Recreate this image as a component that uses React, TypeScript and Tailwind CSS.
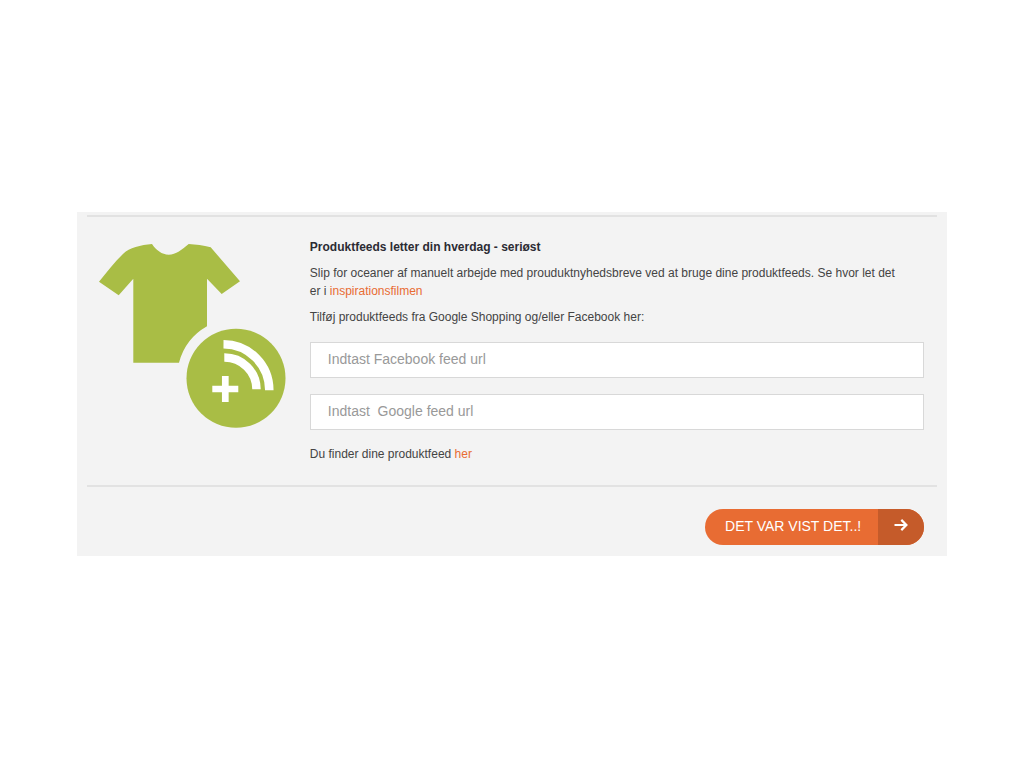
import { useState } from "react";

const inputClass =
  "block w-full h-9 px-[17px] pb-0.5 bg-white border border-[#d8d8d8] text-sm text-[#444] placeholder-[#999] focus:outline-none focus:border-[#e86c33]";

function FeedIcon() {
  return (
    <svg viewBox="0 0 188 186" className="w-[188px] h-[186px] shrink-0" aria-hidden="true">
      <path
        fill="#a9bd45"
        d="M1 38.700C9 29 17 18.500 25.500 10.500C31 5 43 1.800 54 1C58 7 64 11.700 70.700 11.700C78 11.700 84 6.500 90.700 1C98 1.300 105 2.500 112.700 4.300L142 38.300L123.700 51L109 35.700V83.300A59 59 0 0 0 81 119.700H35.300V35.700L20.700 52.300Z"
      />
      <circle cx="138" cy="135.300" r="49.500" fill="#a9bd45" />
      <g fill="none" stroke="#fff">
        <path strokeWidth="8.500" d="M125.500 101.200A46 46 0 0 1 171.300 147.300" />
        <path strokeWidth="8.500" d="M126.300 114.500A32 32 0 0 1 158.500 146.300" />
        <path strokeWidth="6.700" d="M114.300 146H140.300M127.300 133V159" />
      </g>
    </svg>
  );
}

export default function App() {
  const [facebookUrl, setFacebookUrl] = useState("");
  const [googleUrl, setGoogleUrl] = useState("");

  return (
    <div className="min-h-screen flex items-center justify-center bg-white font-['Liberation_Sans',Arial,sans-serif]">
      <form
        onSubmit={(e) => e.preventDefault()}
        className="w-[85%] bg-[#f3f3f3] pt-[3px] px-[10px] pb-[11px] text-xs leading-[18px] text-[#444]"
      >
        <div className="flex gap-6 border-y-2 border-[#e2e2e2] pl-[11px] pr-[13px] pt-[21px] pb-[22px]">
          <div className="pt-[5px]">
            <FeedIcon />
          </div>

          <div className="flex-1 min-w-0">
            <h2 className="mb-2 font-bold text-[#2b2b33]">Produktfeeds letter din hverdag - seriøst</h2>
            <p className="mb-2">
              Slip for oceaner af manuelt arbejde med prouduktnyhedsbreve ved at bruge dine produktfeeds. Se hvor let det
              <br />
              er i{" "}
              <a href="#film" className="text-[#e86c33] hover:underline">
                inspirationsfilmen
              </a>
            </p>
            <p className="mb-4">Tilføj produktfeeds fra Google Shopping og/eller Facebook her:</p>

            <div className="mb-[15px] space-y-4">
              <input
                type="url"
                aria-label="Facebook feed url"
                value={facebookUrl}
                onChange={(e) => setFacebookUrl(e.target.value)}
                placeholder="Indtast Facebook feed url"
                className={inputClass}
              />
              <input
                type="url"
                aria-label="Google feed url"
                value={googleUrl}
                onChange={(e) => setGoogleUrl(e.target.value)}
                placeholder="Indtast  Google feed url"
                className={inputClass}
              />
            </div>

            <p>
              Du finder dine produktfeed{" "}
              <a href="#feed" className="text-[#e86c33] hover:underline">
                her
              </a>
            </p>
          </div>
        </div>

        <div className="flex justify-end pt-[22px] pr-[13px]">
          <button
            type="submit"
            className="flex h-9 items-stretch overflow-hidden rounded-full bg-[#e86c33] text-sm text-white"
          >
            <span className="flex items-center pl-5 pr-[17px] pb-0.5">DET VAR VIST DET..!</span>
            <span className="flex w-[46px] items-center justify-center bg-[#c55b2a] pb-1">
              <svg viewBox="0 0 14 12" className="w-[14px] h-3" fill="none" stroke="#fff" strokeWidth="2.200" aria-hidden="true">
                <path d="M0.500 6H12.500M7.300 0.900L12.400 6L7.300 11.100" />
              </svg>
            </span>
          </button>
        </div>
      </form>
    </div>
  );
}
